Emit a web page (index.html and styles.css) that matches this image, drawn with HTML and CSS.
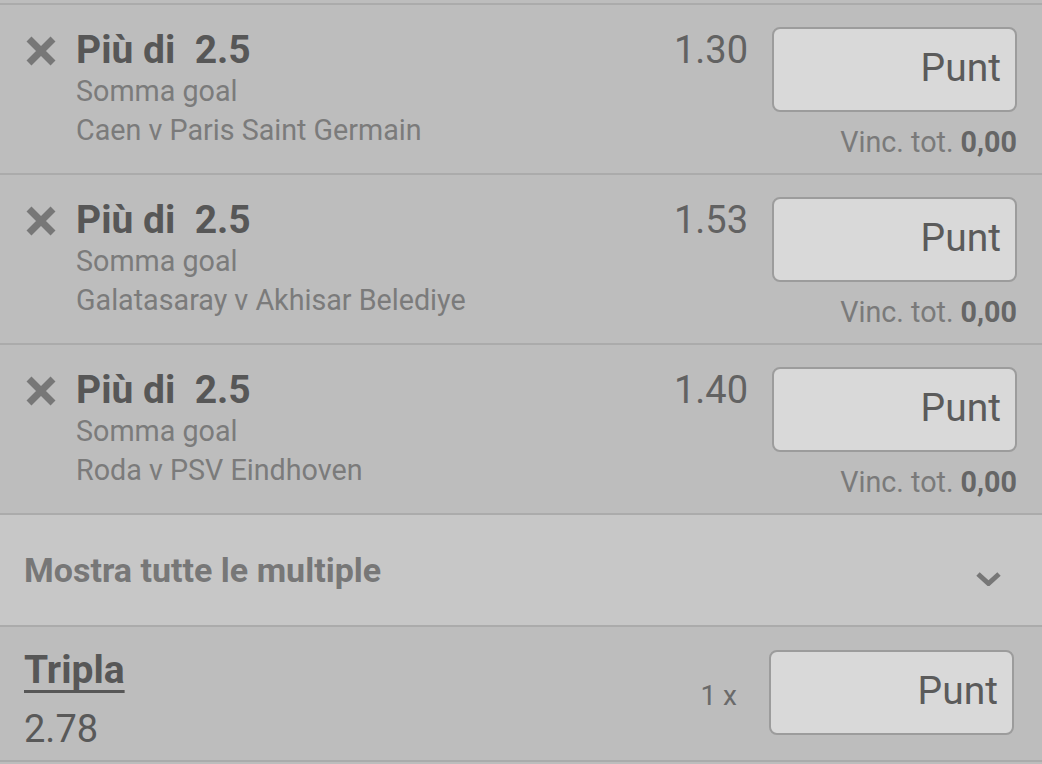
FILE: index.html
```html
<!DOCTYPE html>
<html lang="it">
  <head>
    <meta charset="UTF-8" />
    <meta name="viewport" content="width=device-width, initial-scale=1.0" />
    <title>Schedina</title>
    <link rel="stylesheet" href="styles.css">
  </head>
  <body>
    <main class="slip">
      <div class="bet">
        <div class="pick">
          <svg class="remove" width="30" height="30" viewBox="0 0 30 30">
            <path d="M3 3L27 27M27 3L3 27" />
          </svg>
          <div class="pickText">
            <div class="selection">Più di&nbsp; 2.5</div>
            <div class="market">Somma goal</div>
            <div class="market">Caen v Paris Saint Germain</div>
          </div>
        </div>
        <div class="odds">1.30</div>
        <div class="stake">
          <div class="stakeBox">Punt</div>
          <div class="win">Vinc. tot. <b>0,00</b></div>
        </div>
      </div>

      <div class="bet">
        <div class="pick">
          <svg class="remove" width="30" height="30" viewBox="0 0 30 30">
            <path d="M3 3L27 27M27 3L3 27" />
          </svg>
          <div class="pickText">
            <div class="selection">Più di&nbsp; 2.5</div>
            <div class="market">Somma goal</div>
            <div class="market">Galatasaray v Akhisar Belediye</div>
          </div>
        </div>
        <div class="odds">1.53</div>
        <div class="stake">
          <div class="stakeBox">Punt</div>
          <div class="win">Vinc. tot. <b>0,00</b></div>
        </div>
      </div>

      <div class="bet">
        <div class="pick">
          <svg class="remove" width="30" height="30" viewBox="0 0 30 30">
            <path d="M3 3L27 27M27 3L3 27" />
          </svg>
          <div class="pickText">
            <div class="selection">Più di&nbsp; 2.5</div>
            <div class="market">Somma goal</div>
            <div class="market">Roda v PSV Eindhoven</div>
          </div>
        </div>
        <div class="odds">1.40</div>
        <div class="stake">
          <div class="stakeBox">Punt</div>
          <div class="win">Vinc. tot. <b>0,00</b></div>
        </div>
      </div>

      <div class="showAll">
        <span>Mostra tutte le multiple</span>
        <svg class="chevron" width="25" height="14" viewBox="0 0 25 14">
          <path d="M2 2L12.5 11.5L23 2" />
        </svg>
      </div>

      <div class="multi">
        <div class="multiInfo">
          <div class="multiName">Tripla</div>
          <div class="multiOdds">2.78</div>
        </div>
        <div class="multiCount">1 x</div>
        <div class="stakeBox multiBox">Punt</div>
      </div>
    </main>
  </body>
</html>
```

FILE: styles.css
```css
body {
  margin: 0;
  background-color: #bdbdbd;
  font-family: Roboto, 'Noto Sans', Arial, sans-serif;
  color: #595959;
}
.slip {
  padding-top: 3px;
}
.bet {
  display: flex;
  align-items: flex-start;
  height: 146px;
  padding: 22px 25px 0 26px;
  border-top: 2px solid #ababab;
}
.pick {
  flex: 1 1 auto;
  display: flex;
  align-items: flex-start;
  gap: 20px;
}
.remove {
  flex: 0 0 30px;
  margin-top: 9px;
  stroke: #777777;
  stroke-width: 7;
  fill: none;
}
.pickText {
  display: flex;
  flex-direction: column;
}
.selection {
  font-size: 39px;
  font-weight: bold;
  line-height: 44px;
  margin-top: 1px;
  color: #575757;
}
.market {
  font-size: 28.7px;
  line-height: 39px;
  color: #7b7b7b;
}
.odds {
  flex: 0 0 auto;
  font-size: 38px;
  line-height: 44px;
  margin-top: 1px;
  margin-right: 24px;
  color: #626262;
}
.stake {
  flex: 0 0 245px;
  display: flex;
  flex-direction: column;
  align-items: stretch;
}
.stakeBox {
  box-sizing: border-box;
  height: 85px;
  display: flex;
  align-items: center;
  justify-content: flex-end;
  padding: 0 14px 3px 0;
  background-color: #d9d9d9;
  border: 2px solid #9c9c9c;
  border-radius: 8px;
  font-size: 39px;
  color: #5b5b5b;
}
.win {
  margin-top: 11px;
  text-align: right;
  font-size: 28.7px;
  line-height: 39px;
  color: #7a7a7a;

  & > b {
    color: #666666;
  }
}
.showAll {
  display: flex;
  align-items: center;
  justify-content: space-between;
  height: 110px;
  padding: 0 41px 0 24px;
  background-color: #c7c7c7;
  border-top: 2px solid #ababab;
  font-size: 34px;
  font-weight: bold;
  color: #777777;
}
.chevron {
  margin-top: 18px;
  stroke: #777777;
  stroke-width: 5;
  fill: none;
}
.multi {
  display: flex;
  align-items: flex-start;
  height: 112px;
  padding: 21px 28px 0 24px;
  border-top: 2px solid #ababab;
  border-bottom: 2px solid #ababab;
}
.multiInfo {
  flex: 1 1 auto;
}
.multiName {
  display: inline-block;
  font-size: 39px;
  font-weight: bold;
  line-height: 44px;
  color: #575757;
  text-decoration: underline;
  text-decoration-thickness: 3px;
  text-underline-offset: 7px;
  text-decoration-skip-ink: none;
}
.multiOdds {
  margin-top: 15px;
  font-size: 38px;
  line-height: 44px;
  color: #595959;
}
.multiCount {
  margin-top: 28px;
  margin-right: 32px;
  font-size: 28px;
  line-height: 39px;
  color: #6a6a6a;
}
.multiBox {
  flex: 0 0 245px;
  height: 85px;
  margin-top: 2px;
}
```
